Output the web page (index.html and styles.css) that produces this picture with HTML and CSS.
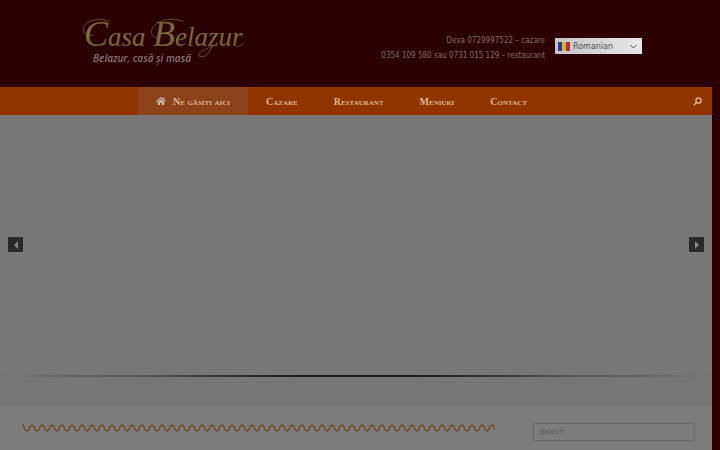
FILE: index.html
```html
<!doctype html>
<html lang="ro">
  <head>
    <meta charset="utf-8" />
    <meta name="viewport" content="width=device-width, initial-scale=1" />
    <title>Casa Belazur</title>
    <link rel="stylesheet" href="styles.css">
  </head>

  <body>
    <header class="masthead">
      <a href="#" class="logo">
        <svg width="176" height="62" viewBox="0 0 176 62" role="img" aria-label="Casa Belazur">
          <defs>
            <linearGradient id="gold" x1="0" y1="0" x2="0" y2="1">
              <stop offset="0" stop-color="#6a5232" />
              <stop offset="0.5" stop-color="#806d45" />
              <stop offset="1" stop-color="#5c5a30" />
            </linearGradient>
          </defs>
          <g class="flourish">
            <path d="M34 12C28 8 15 9 10 15C6 21 10 27 18 25" />
            <path d="M82 28C74 27 75 16 84 12C94 8 104 9 108 12" />
            <path d="M137 36C134 46 128 48 124 46C122 42 132 38 142 35" />
            <path d="M161 36C164 37 167 35 169 33" />
          </g>
          <text class="logo-name" x="9" y="36"><tspan class="initial">C</tspan>asa</text>
          <text class="logo-name" x="78" y="36"><tspan class="initial">B</tspan>elazur</text>
          <text class="logo-tagline" x="18" y="52">Belazur, casă și masă</text>
        </svg>
      </a>
      <p class="contact">
        Deva 0729997522 – cazare<br />
        0354 109 580 sau 0731 015 129 – restaurant
      </p>
      <div class="language">
        <svg class="flag" width="12" height="9" viewBox="0 0 12 9" aria-hidden="true">
          <path fill="#263b91" d="M0 0h4v9H0z" />
          <path fill="#d3b833" d="M4 0h4v9H4z" />
          <path fill="#b52c38" d="M8 0h4v9H8z" />
        </svg>
        <select aria-label="Language">
          <option>Romanian</option>
          <option>English</option>
        </select>
        <svg class="chevron" width="7" height="5" viewBox="0 0 7 5" aria-hidden="true">
          <path d="M.5 1l3 3 3-3" />
        </svg>
      </div>
    </header>

    <nav class="main-nav">
      <ul class="menu">
        <li>
          <a href="#" class="current">
            <svg width="10" height="8" viewBox="0 0 20 16" aria-hidden="true">
              <path d="M10 0L0 8.500l1.500 1.700L10 3l8.500 7.200L20 8.500l-3.500-3V1H14v2.400zM10 4.500L3.500 10v6h4.700v-4.500h3.600V16h4.700v-6z" />
            </svg>
            Ne găsiti aici
          </a>
        </li>
        <li><a href="#">Cazare</a></li>
        <li><a href="#">Restaurant</a></li>
        <li><a href="#">Meniuri</a></li>
        <li><a href="#">Contact</a></li>
      </ul>
      <button type="button" class="search-toggle" aria-label="Search">
        <svg width="9" height="9" viewBox="0 0 9 9">
          <circle cx="5.500" cy="3.500" r="2.600" />
          <path d="M3.500 5.500L.7 8.200" />
        </svg>
      </button>
    </nav>

    <section class="slider">
      <button type="button" class="arrow" aria-label="Previous">
        <svg width="4" height="8" viewBox="0 0 4 8"><path d="M4 0v8L0 4z" /></svg>
      </button>
      <button type="button" class="arrow" aria-label="Next">
        <svg width="4" height="8" viewBox="0 0 4 8"><path d="M0 0v8l4-4z" /></svg>
      </button>
    </section>
    <div class="slider-shadow"></div>

    <main class="content">
      <svg class="wave" height="8" aria-hidden="true">
        <defs>
          <pattern id="ripple" width="10" height="8" patternUnits="userSpaceOnUse">
            <path d="M-5 7C-2.500 7-2.500 1 0 1S2.500 7 5 7 7.500 1 10 1s2.500 6 5 6" />
          </pattern>
        </defs>
        <rect width="100%" height="8" fill="url(#ripple)" />
      </svg>
      <form class="search-form">
        <input type="search" placeholder="Search" aria-label="Search" />
      </form>
    </main>
  </body>
</html>
```

FILE: styles.css
```css
* {
  box-sizing: border-box;
}

body {
  background: #2c0002;
  font-family: "DejaVu Sans", sans-serif;
  margin: 0;
  min-height: 100vh;
  padding-right: 8px;
  display: flex;
  flex-direction: column;
}

button {
  border: 0;
  cursor: pointer;
  padding: 0;
}

.masthead {
  display: flex;
  align-items: center;
  padding: 10px 70px 15px 75px;
}

.logo {
  background: #2a0001;
  display: block;
  height: 62px;
}

.flourish path {
  fill: none;
  stroke: #66502f;
}

.logo-name {
  fill: url(#gold);
  font-family: "Liberation Serif", serif;
  font-size: 27px;
  font-style: italic;
}

.initial {
  font-size: 36px;
}

.logo-tagline {
  fill: #84777a;
  font-family: "Open Sans", sans-serif;
  font-size: 10px;
  font-style: italic;
  font-weight: 600;
}

.contact {
  color: #806c6e;
  flex: 1;
  font-family: "DejaVu Sans Condensed", Roboto, sans-serif;
  font-size: 8px;
  line-height: 15px;
  margin: 14px 10px 0 0;
  text-align: right;
}

.language {
  background: linear-gradient(90deg, #c4c4c4, #e8e8e8);
  display: flex;
  align-items: center;
  gap: 3px;
  height: 16px;
  margin-top: 10px;
  padding: 0 5px 0 3px;
  width: 87px;
}

.language select {
  appearance: none;
  background: none;
  border: 0;
  color: #555;
  flex: 1;
  font-family: "DejaVu Sans", sans-serif;
  font-size: 8px;
  min-width: 0;
  padding: 0;
}

.chevron path {
  fill: none;
  stroke: #555;
}

.main-nav {
  background: #903500;
  display: flex;
  height: 28px;
}

.menu {
  display: flex;
  flex: 1;
  justify-content: center;
  list-style: none;
  margin: 0;
  padding: 0;
}

.menu a {
  color: #dcb68f;
  display: flex;
  align-items: center;
  font-family: "Liberation Serif", serif;
  font-size: 10px;
  font-variant: small-caps;
  font-weight: bold;
  height: 28px;
  padding: 0 18px;
  text-decoration: none;
}

.menu .current {
  background: #8c431c;
}

.menu svg {
  fill: #c8b8b0;
  margin-right: 7px;
}

.search-toggle {
  background: none;
  width: 29px;
}

.search-toggle svg {
  fill: none;
  stroke: #d8b08c;
  stroke-width: 1.5;
}

.slider {
  background: #777;
  display: flex;
  align-items: center;
  justify-content: space-between;
  height: 259px;
  padding: 0 8px;
}

.arrow {
  background: #292929;
  border-radius: 1px;
  display: flex;
  align-items: center;
  justify-content: center;
  height: 15px;
  width: 15px;
}

.arrow svg {
  fill: #858585;
}

.slider-shadow {
  background:
    linear-gradient(90deg, transparent, #505050 22%, #181818 42%, #181818 58%, #505050 78%, transparent) 0 1px / 100% 2px no-repeat,
    #767676;
  height: 32px;
}

.content {
  background: #7c7c7c;
  display: flex;
  align-items: flex-start;
  flex: 1;
  gap: 38px;
  padding: 17px 17px 0 22px;
}

.wave {
  flex: 1;
  margin-top: 1px;
  min-width: 0;
}

.wave path {
  fill: none;
  stroke: #744a1e;
  stroke-width: 1.5;
}

.search-form {
  width: 162px;
}

.search-form input {
  background: #7c7c7c;
  border: 1px solid #6a6a6a;
  border-radius: 1px;
  display: block;
  font-family: "DejaVu Sans", sans-serif;
  font-size: 7px;
  height: 18px;
  padding: 0 6px;
  width: 100%;
}

.search-form input::placeholder {
  color: #5c5c5c;
}
```
